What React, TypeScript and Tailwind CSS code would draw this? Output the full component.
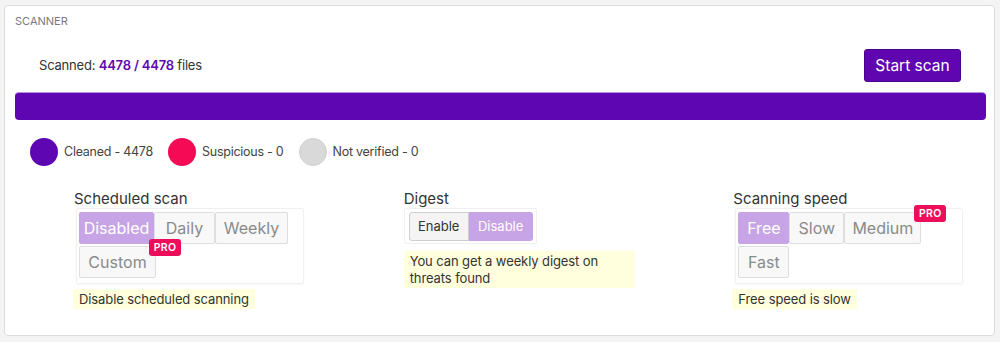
import React from "react";

const font = { fontFamily: "Inter, 'Liberation Sans', Arial, sans-serif" };

function Pro() {
  return (
    <span className="absolute top-[-8px] right-[-26px] z-10 w-[32px] h-[17px] rounded-[3px] bg-[#ee0d5b] text-white text-[10.5px] font-semibold leading-[17px] text-center tracking-[0.3px]">
      PRO
    </span>
  );
}

type Opt = { label: string; w: number; active?: boolean; pro?: boolean };

function BigGroup({ opts }: { opts: Opt[] }) {
  return (
    <div className="ml-[3px] w-[228px] h-[76px] border border-[#f0f0f0] rounded-[2px] shadow-[0_1px_2px_rgba(0,0,0,0.04)] px-[2px] pt-[3px] flex flex-wrap content-start gap-y-[2px]">
      {opts.map((o) => (
        <div
          key={o.label}
          style={{ width: o.w }}
          className={
            "relative h-[32px] flex items-center justify-center text-[16px] border rounded-[2px] " +
            (o.active
              ? "bg-[#c7a4e5] border-[#c7a4e5] text-white"
              : "bg-[#f8f8f8] border-[#dedede] text-[#8a8a8a]")
          }
        >
          {o.label}
          {o.pro && <Pro />}
        </div>
      ))}
    </div>
  );
}

function Hint({ children, w }: { children: React.ReactNode; w?: string }) {
  return (
    <div className={"bg-[#ffffdd] text-[#333] text-[13px] leading-[17px] pl-[6px] pr-[6px] pt-[2px] pb-[1px] tracking-[-0.1px] " + (w ?? "w-fit")}>
      {children}
    </div>
  );
}

export default function App() {
  return (
    <div style={font} className="w-[1000px] h-[342px] bg-[#f4f4f4] pt-[5px] pl-[4px]">
      <div className="w-[991px] h-[331px] bg-white border border-[#dcdcdc] rounded-[4px]">
        <div className="pl-[10px] pt-[8px] text-[11px] leading-[14px] text-[#7a7a7a]">SCANNER</div>
        <div className="mt-[21px] flex items-center justify-between pl-[34px] pr-[33px]">
          <div className="text-[13px] text-[#333] tracking-[-0.2px]">
            Scanned: <span className="text-[#5e0ab0] font-semibold">4478 / 4478</span> files
          </div>
          <button className="w-[97px] h-[33px] bg-[#5f06b1] border border-[#4a038c] rounded-[3px] text-white text-[15.5px]">
            Start scan
          </button>
        </div>
        <div className="mt-[10px] ml-[10px] mr-[8px] h-[28px] bg-[#5f06b3] rounded-[4px] border-t border-[#b98de3]" />
        <div className="mt-[18px] pl-[25px] flex items-center text-[12.5px] text-[#444] tracking-[-0.25px]">
          <span className="w-[28px] h-[28px] rounded-full bg-[#5f06b3]" />
          <span className="ml-[6px]">Cleaned - 4478</span>
          <span className="ml-[15px] w-[28px] h-[28px] rounded-full bg-[#f50a55]" />
          <span className="ml-[6px]">Suspicious - 0</span>
          <span className="ml-[15px] w-[28px] h-[28px] rounded-full bg-[#d9d9d9] border border-[#cfcfcf]" />
          <span className="ml-[6px]">Not verified - 0</span>
        </div>
        <div className="mt-[24px] flex">
          <div className="w-[330px] pl-[68px]">
            <div className="ml-[1px] text-[15px] leading-[18px] text-[#333]">Scheduled scan</div>
            <BigGroup
              opts={[
                { label: "Disabled", w: 75, active: true },
                { label: "Daily", w: 61 },
                { label: "Weekly", w: 73 },
                { label: "Custom", w: 77, pro: true },
              ]}
            />
            <div className="mt-[5px]">
              <Hint>Disable scheduled scanning</Hint>
            </div>
          </div>
          <div className="w-[330px] pl-[69px]">
            <div className="text-[15px] leading-[18px] text-[#333]">Digest</div>
            <div className="w-[133px] h-[36px] border border-[#f0f0f0] rounded-[2px] pl-[4px] pt-[3px] flex">
              <div className="w-[60px] h-[29px] flex items-center justify-center text-[13px] text-[#333] bg-[#f4f4f4] border border-[#cfcfcf] rounded-l-[3px]">
                Enable
              </div>
              <div className="w-[64px] h-[29px] flex items-center justify-center text-[13px] text-white bg-[#c7a4e5] rounded-r-[3px]">
                Disable
              </div>
            </div>
            <div className="mt-[7px]">
              <Hint w="w-[231px]">You can get a weekly digest on threats found</Hint>
            </div>
          </div>
          <div className="w-[330px] pl-[68px]">
            <div className="ml-[1px] text-[15px] leading-[18px] text-[#333]">Scanning speed</div>
            <BigGroup
              opts={[
                { label: "Free", w: 51, active: true },
                { label: "Slow", w: 55 },
                { label: "Medium", w: 77, pro: true },
                { label: "Fast", w: 51 },
              ]}
            />
            <div className="mt-[5px]">
              <Hint>Free speed is slow</Hint>
            </div>
          </div>
        </div>
      </div>
    </div>
  );
}
